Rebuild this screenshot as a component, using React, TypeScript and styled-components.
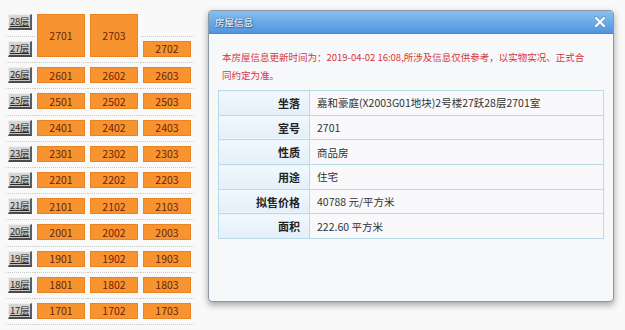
import styled, { createGlobalStyle } from 'styled-components'

const GlobalStyle = createGlobalStyle`
  html, body {
    margin: 0;
    padding: 0;
    background: #f9f9f9;
    overflow: hidden;
    font-family: "Noto Sans CJK SC", "Noto Sans", sans-serif;
  }
`

const Page = styled.div`
  position: relative;
  width: 625px;
  height: 330px;
  padding: 10px 0 0 5.5px;
  box-sizing: border-box;
  overflow: hidden;
`

const FloorTable = styled.table`
  border-collapse: collapse;
`

const Cell = styled.td`
  padding: 4px 2.5px 5.2px;
  border-bottom: 1px dotted #c9c9c9;
  vertical-align: top;
`

const FloorLabel = styled.span`
  display: block;
  width: 24px;
  height: 16px;
  box-sizing: border-box;
  background: linear-gradient(#d9d9d9, #c2c2c2);
  border-style: solid;
  border-width: 1px 2px 2px 1px;
  border-color: #eeeeee #5c5c5c #4a4a4a #eeeeee;
  color: #2a2a2a;
  font-size: 9.5px;
  letter-spacing: -0.3px;
  line-height: 13px;
  white-space: nowrap;
  overflow: hidden;
  text-align: center;
  text-decoration: underline;
`

const Unit = styled.div<{ $tall?: boolean }>`
  width: 48px;
  height: ${p => (p.$tall ? 43 : 16)}px;
  box-sizing: border-box;
  background: #f8942f;
  border: 1px solid #ea8422;
  color: #6a2410;
  font-size: 10.5px;
  display: flex;
  align-items: center;
  justify-content: center;
`

const Spacer = styled.div`
  width: 48px;
  height: 16px;
`

const Dialog = styled.div`
  position: absolute;
  left: 208px;
  top: 10px;
  width: 406px;
  height: 292px;
  box-sizing: border-box;
  border: 1px solid #8b97a5;
  border-radius: 4px;
  background: #f7f8fa;
  box-shadow: 0 3px 7px rgba(0, 0, 0, 0.35);
  overflow: hidden;
`

const Header = styled.div`
  height: 23px;
  display: flex;
  align-items: center;
  justify-content: space-between;
  padding: 0 7px 0 6px;
  background: linear-gradient(#88bff0, #4f96de);
  border-bottom: 1px solid #4a8acb;
  box-sizing: border-box;
`

const Title = styled.span`
  color: #fff;
  font-size: 9.5px;
  text-shadow: 0 0 2px #2d5f95, 1px 1px 1px #2d5f95;
`

const CloseButton = styled.button`
  border: none;
  background: none;
  padding: 0;
  width: 12px;
  height: 12px;
  display: flex;
  cursor: pointer;
`

const Body = styled.div`
  padding: 14px 9px 0 9px;
`

const Notice = styled.p`
  margin: 0 0 6px;
  padding: 0 14px 0 4px;
  color: #d5363c;
  font-size: 9.5px;
  line-height: 18px;
`

const InfoTable = styled.table`
  width: 100%;
  border-collapse: collapse;
  border: 1px solid #b8dbe6;
`

const Label = styled.th`
  width: 91px;
  height: 24.7px;
  padding: 0 9px 0 0;
  box-sizing: border-box;
  text-align: right;
  font-size: 11px;
  font-weight: bold;
  color: #222;
  background: linear-gradient(#f2f8fd, #e3eff9);
  border: 1px solid #b8dbe6;
`

const Value = styled.td`
  padding: 0 0 0 7px;
  font-size: 10.5px;
  color: #333;
  background: #f9f9fb;
  border: 1px solid #b8dbe6;
`

const floors = [26, 25, 24, 23, 22, 21, 20, 19, 18, 17]

const info: [string, string][] = [
  ['坐落', '嘉和豪庭(X2003G01地块)2号楼27跃28层2701室'],
  ['室号', '2701'],
  ['性质', '商品房'],
  ['用途', '住宅'],
  ['拟售价格', '40788 元/平方米'],
  ['面积', '222.60 平方米'],
]

const App = () => {
  return (
    <>
      <GlobalStyle />
      <Page>
        <FloorTable>
          <tbody>
            <tr>
              <Cell><FloorLabel>28层</FloorLabel></Cell>
              <Cell rowSpan={2}><Unit $tall>2701</Unit></Cell>
              <Cell rowSpan={2}><Unit $tall>2703</Unit></Cell>
              <Cell><Spacer /></Cell>
            </tr>
            <tr>
              <Cell><FloorLabel>27层</FloorLabel></Cell>
              <Cell><Unit>2702</Unit></Cell>
            </tr>
            {floors.map(f => (
              <tr key={f}>
                <Cell><FloorLabel>{f}层</FloorLabel></Cell>
                <Cell><Unit>{f}01</Unit></Cell>
                <Cell><Unit>{f}02</Unit></Cell>
                <Cell><Unit>{f}03</Unit></Cell>
              </tr>
            ))}
          </tbody>
        </FloorTable>

        <Dialog>
          <Header>
            <Title>房屋信息</Title>
            <CloseButton>
              <svg width="12" height="12" viewBox="0 0 12 12">
                <path d="M2 2 L10 10 M10 2 L2 10" stroke="#5d8fc0" strokeWidth="3.6" strokeLinecap="round" />
                <path d="M2 2 L10 10 M10 2 L2 10" stroke="#fff" strokeWidth="2.4" strokeLinecap="round" />
              </svg>
            </CloseButton>
          </Header>
          <Body>
            <Notice>
              本房屋信息更新时间为：2019-04-02 16:08,所涉及信息仅供参考，以实物实况、正式合同约定为准。
            </Notice>
            <InfoTable>
              <tbody>
                {info.map(([k, v]) => (
                  <tr key={k}>
                    <Label>{k}</Label>
                    <Value>{v}</Value>
                  </tr>
                ))}
              </tbody>
            </InfoTable>
          </Body>
        </Dialog>
      </Page>
    </>
  )
}

export default App
